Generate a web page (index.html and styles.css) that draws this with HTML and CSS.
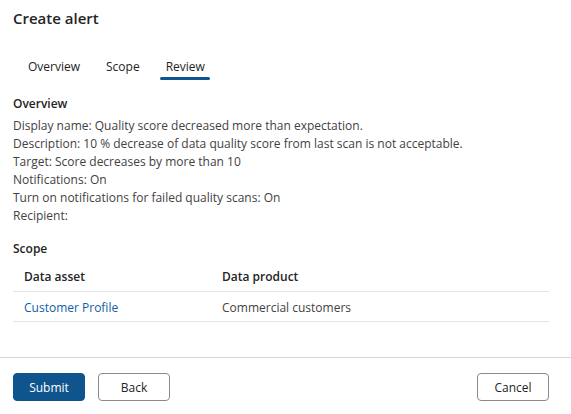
FILE: index.html
```html
<!DOCTYPE html>
<html lang="en">
<head>
<meta charset="utf-8">
<title>Create alert</title>
<link rel="stylesheet" href="styles.css">
</head>
<body>
<div class="dialog">
  <div class="content">
    <h1 class="title">Create alert</h1>
    <nav class="tabs">
      <span class="tab">Overview</span>
      <span class="tab">Scope</span>
      <span class="tab active">Review</span>
    </nav>
    <section class="section">
      <h2 class="section-title">Overview</h2>
      <p class="line">Display name: Quality score decreased more than expectation.</p>
      <p class="line">Description: 10 % decrease of data quality score from last scan is not acceptable.</p>
      <p class="line">Target: Score decreases by more than 10</p>
      <p class="line">Notifications: On</p>
      <p class="line">Turn on notifications for failed quality scans: On</p>
      <p class="line">Recipient:</p>
    </section>
    <section class="section scope">
      <h2 class="section-title">Scope</h2>
      <div class="table">
        <div class="row head">
          <div class="cell c1">Data asset</div>
          <div class="cell">Data product</div>
        </div>
        <div class="row">
          <div class="cell c1"><a class="link" href="#">Customer Profile</a></div>
          <div class="cell">Commercial customers</div>
        </div>
      </div>
    </section>
  </div>
  <footer class="footer">
    <button class="btn primary">Submit</button>
    <button class="btn">Back</button>
    <span class="spacer"></span>
    <button class="btn">Cancel</button>
  </footer>
</div>
</body>
</html>
```

FILE: styles.css
```css
* { box-sizing: border-box; }
html, body { margin: 0; padding: 0; background: #fff; }
body {
  font-family: "Open Sans", "Noto Sans", sans-serif;
  font-size: 12px;
  color: #424242;
  width: 571px;
  height: 414px;
  overflow: hidden;
}
.dialog { display: flex; flex-direction: column; height: 414px; }
.content { padding: 0 13px; flex: 1; }
.title {
  margin: 0;
  padding-top: 6px;
  font-size: 15px;
  line-height: 24px;
  font-weight: 600;
  color: #242424;
}
.tabs {
  display: flex;
  margin: 24px 0 0 2px;
}
.tab {
  position: relative;
  padding: 0 13px;
  line-height: 26px;
  height: 30px;
  color: #242424;
}
.tab.active::after {
  content: "";
  position: absolute;
  left: 7px;
  right: 8px;
  bottom: 4px;
  height: 3px;
  border-radius: 2px;
  background: #0f548c;
}
.section { margin-top: 11px; }
.section-title {
  margin: 0 0 4px;
  font-size: 12px;
  font-weight: 600;
  line-height: 18px;
  color: #242424;
}
.line { margin: 0; line-height: 18px; }
.scope { margin-top: 15px; }
.table { width: 536px; margin-top: 2px; }
.row {
  display: flex;
  height: 30px;
  align-items: center;
  border-bottom: 1px solid #e6e6e6;
}
.row.head { color: #242424; font-weight: 600; }
.row + .row { padding-top: 1px; }
.cell { padding: 0 11px; }
.c1 { width: 198px; }
.link { color: #115ea3; text-decoration: none; }
.footer {
  display: flex;
  align-items: center;
  border-top: 1px solid #d6d6d6;
  padding: 15px 22px 13px 13px;
  gap: 13px;
}
.spacer { flex: 1; }
.btn {
  font-family: inherit;
  font-size: 12px;
  width: 72px;
  height: 28px;
  border: 1px solid #8a8a8a;
  border-radius: 4px;
  background: #fff;
  color: #242424;
  padding: 0;
}
.btn.primary {
  background: #0f548c;
  border-color: #0f548c;
  color: #fff;
}
```
